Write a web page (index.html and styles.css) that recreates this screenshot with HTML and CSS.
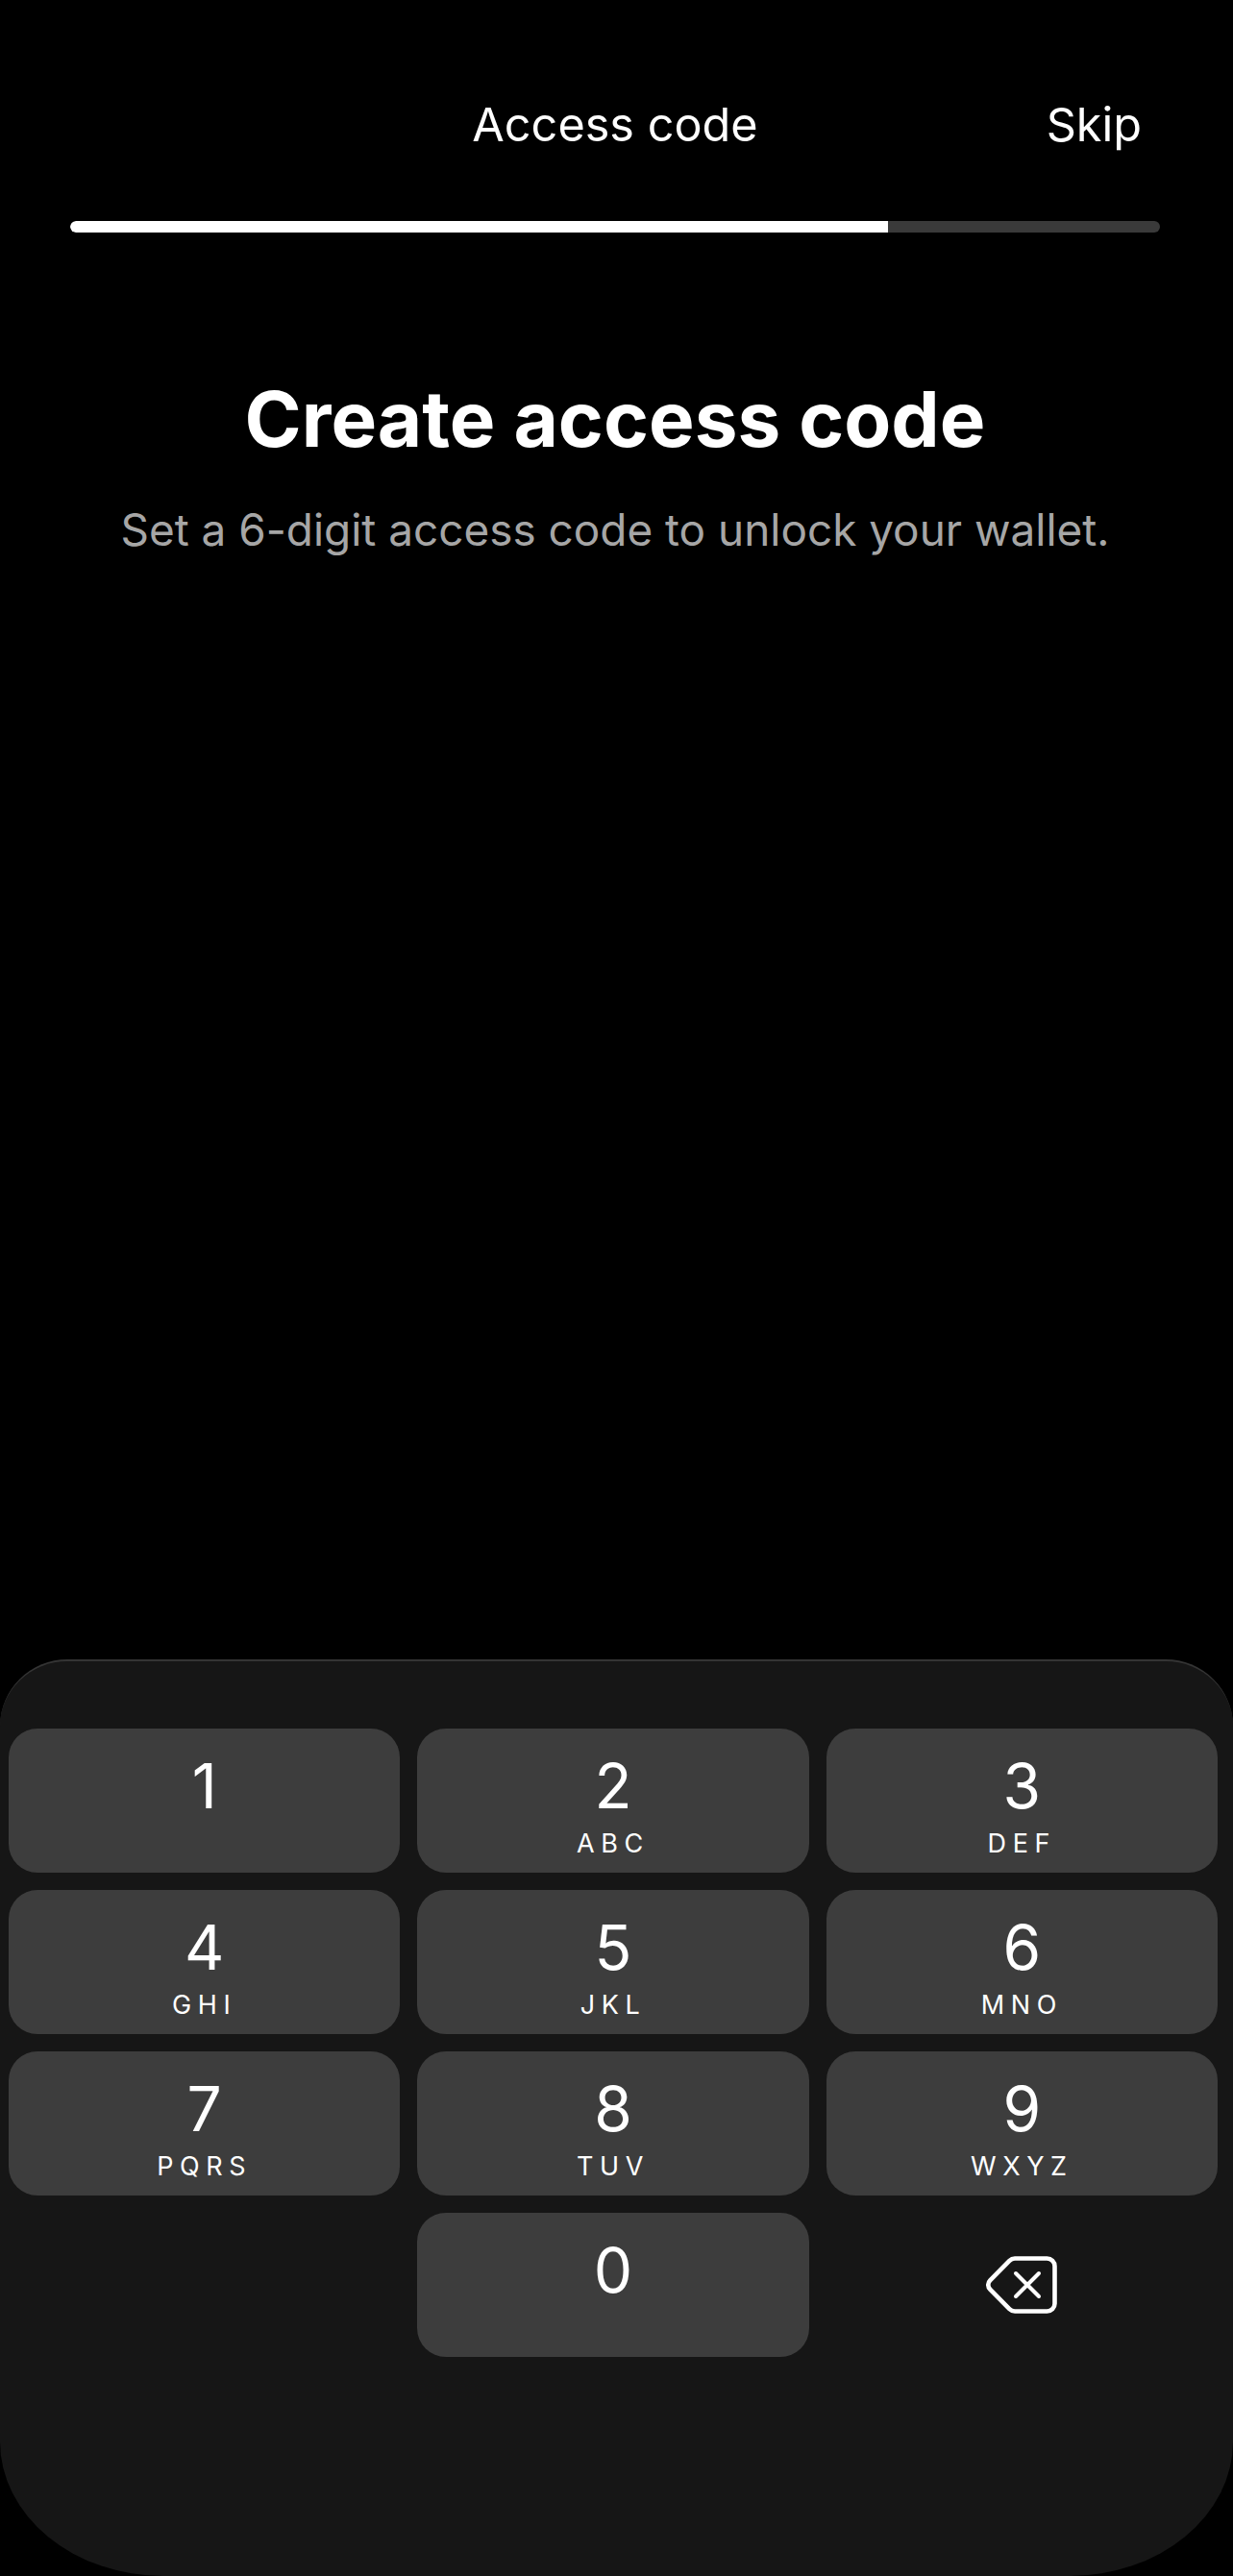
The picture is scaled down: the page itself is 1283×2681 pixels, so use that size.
FILE: index.html
```html
<!DOCTYPE html>
<html lang="en">
<head>
<meta charset="utf-8">
<title>Access code</title>
<link rel="stylesheet" href="styles.css">
</head>
<body>
<main class="screen">
  <header class="topbar">
    <span></span>
    <h2 class="topbar-title">Access code</h2>
    <a class="skip">Skip</a>
  </header>
  <div class="progress"><div class="progress-fill"></div></div>
  <section class="intro">
    <h1 class="intro-title">Create access code</h1>
    <p class="intro-sub">Set a 6-digit access code to unlock your wallet.</p>
  </section>
  <section class="keypad">
    <div class="keys">
      <button class="key"><span class="digit">1</span></button>
      <button class="key"><span class="digit">2</span><span class="letters">ABC</span></button>
      <button class="key"><span class="digit">3</span><span class="letters">DEF</span></button>
      <button class="key"><span class="digit">4</span><span class="letters">GHI</span></button>
      <button class="key"><span class="digit">5</span><span class="letters">JKL</span></button>
      <button class="key"><span class="digit">6</span><span class="letters">MNO</span></button>
      <button class="key"><span class="digit">7</span><span class="letters">PQRS</span></button>
      <button class="key"><span class="digit">8</span><span class="letters">TUV</span></button>
      <button class="key"><span class="digit">9</span><span class="letters">WXYZ</span></button>
      <span class="key-empty"></span>
      <button class="key"><span class="digit">0</span></button>
      <button class="key-icon" aria-label="Delete">
        <svg class="backspace" width="74" height="60" viewBox="0 0 74 60" fill="none" stroke="#fff" stroke-linecap="round" stroke-linejoin="round">
          <path stroke-width="4.6" d="M30 2.5H63.5a8 8 0 0 1 8 8V49.5a8 8 0 0 1-8 8H30a8 8 0 0 1-5.6-2.3L4.2 34.6a6.5 6.5 0 0 1 0-9.2L24.4 4.8A8 8 0 0 1 30 2.5Z"/>
          <path stroke-width="4" d="M31 18 55 42M55 18 31 42"/>
        </svg>
      </button>
    </div>
  </section>
</main>
</body>
</html>
```
FILE: styles.css
```css
* { box-sizing: border-box; }
html, body { margin: 0; background: #000; }
body { font-family: Inter, "Liberation Sans", sans-serif; color: #fff; }
.screen { height: 2681px; display: flex; flex-direction: column; overflow: hidden; }
.topbar { display: grid; grid-template-columns: 1fr auto 1fr; align-items: center; padding: 99px 95px 0 92px; height: 160px; }
.topbar-title { margin: 0; font-size: 48.6px; font-weight: 400; line-height: 60px; }
.skip { justify-self: end; font-size: 48.6px; line-height: 60px; }
.progress { margin: 70px 76px 0 73px; height: 12px; border-radius: 6px; background: #3a3a3a; overflow: hidden; }
.progress-fill { width: 75%; height: 100%; background: #fff; border-radius: 6px 0 0 6px; }
.intro { margin-top: 148px; padding-right: 3px; text-align: center; }
.intro-title { margin: 0; font-size: 80px; font-weight: 700; line-height: 92px; }
.intro-sub { margin: 42px 0 0; font-size: 45.9px; line-height: 56px; color: #a6a6a6; }
.keypad { margin-top: auto; height: 954px; background: #161616; border-top: 2px solid #343434; border-radius: 70px 70px 170px 170px / 70px 70px 140px 140px; padding: 70px 16px 0 9px; }
.keys { display: grid; grid-template-columns: repeat(3, 1fr); grid-auto-rows: 150px; gap: 18px; }
.key { display: flex; flex-direction: column; align-items: center; padding: 24px 0 0; margin: 0; border: 0; border-radius: 30px; background: #3d3d3d; color: #fff; font-family: inherit; }
.key-icon { display: flex; align-items: center; justify-content: center; padding: 0; border: 0; background: none; }
.digit { font-size: 64px; line-height: 72px; font-weight: 400; }
.letters { font-size: 27px; line-height: 32px; letter-spacing: 6.6px; margin-top: 8px; font-weight: 400; }
```
